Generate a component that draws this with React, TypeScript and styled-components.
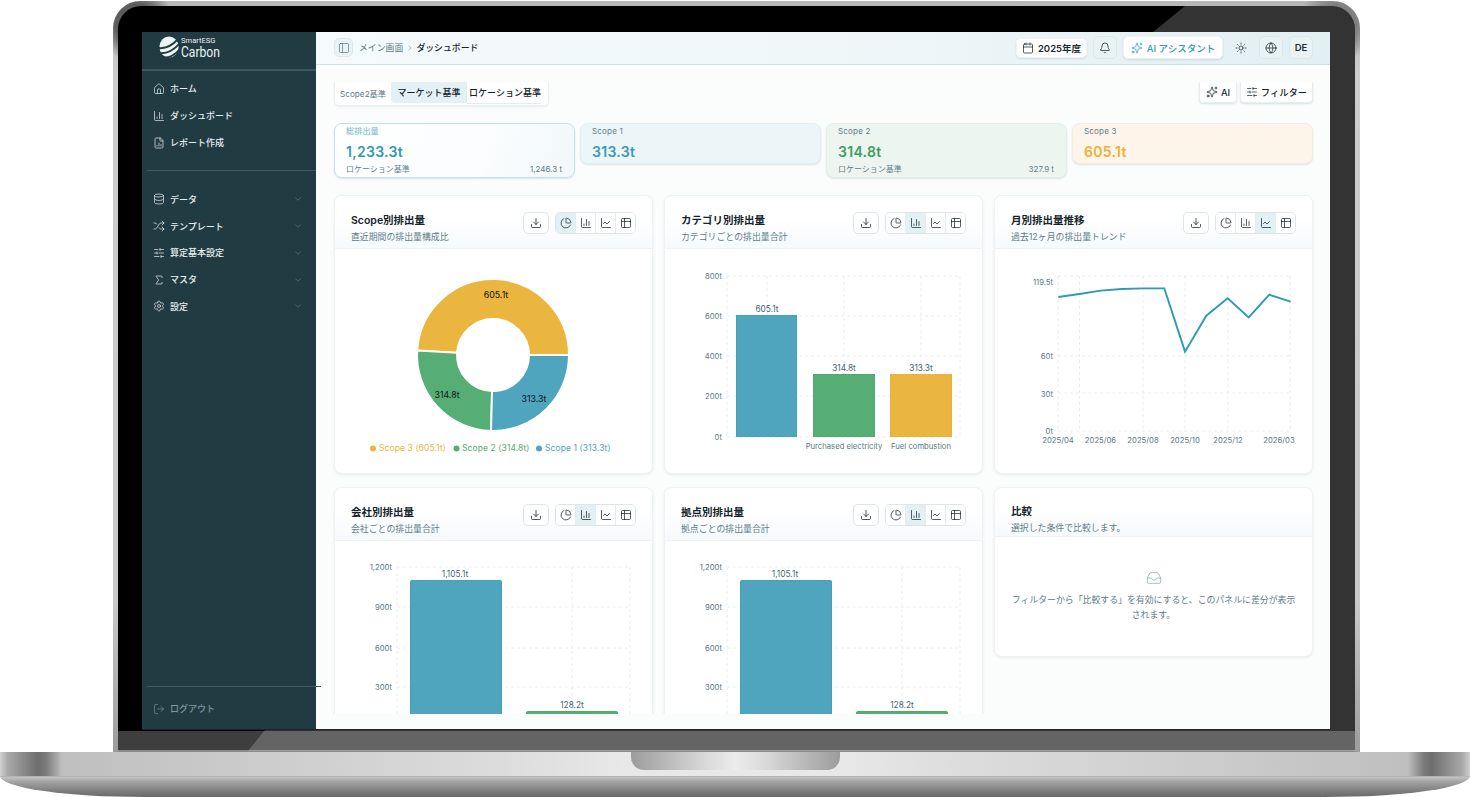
import React from "react";
import styled, { createGlobalStyle } from "styled-components";
import {
  House, ChartColumn, FileChartColumn, Database, Shuffle, SlidersHorizontal, Sigma, Settings,
  ChevronDown, ChevronRight, LogOut, PanelLeft, Calendar, Bell, Sparkles, Sun, Globe, Download,
  ChartPie, ChartLine, Table2, Inbox,
} from "lucide-react";

const Global = createGlobalStyle`
  html, body { margin: 0; padding: 0; background: #fff; overflow: hidden; }
  * { box-sizing: border-box; }
  body { font-family: Inter, "Noto Sans CJK JP", sans-serif; }
`;

const Page = styled.div`
  width: 1470px; height: 797px; display: flex; flex-direction: column; align-items: center; overflow: hidden; background: #fff;
`;
const Lid = styled.div`
  align-self: flex-start; flex: none; width: 1247px; height: 751px; margin: 1px 0 0 113px; padding: 5px 5px 0; border-radius: 27px 27px 0 0;
  background:
    radial-gradient(circle 38px at 24px 24px, #5c5c5c 55%, transparent 100%),
    radial-gradient(circle 38px at calc(100% - 24px) 24px, #808080 55%, transparent 100%),
    linear-gradient(180deg, #b6b6b6 0, #cdcdcd 10%, #c8c8c8 80%, #9c9c9c 100%);
`;
const Bezel = styled.div`
  position: relative; height: 746px; padding: 26px 25px 21px 24px; border-radius: 23px 23px 0 0; overflow: hidden;
  background: linear-gradient(180deg, #000 0, #000 calc(100% - 21px), #3e3e3e calc(100% - 21px), #3e3e3e calc(100% - 2px), #8a8a8a calc(100% - 2px));
  &::after {
    content: ""; position: absolute; inset: 0; background: rgba(255, 255, 255, 0.2);
    clip-path: polygon(1067px 0, 1237px 0, 1237px 745px, 130px 745px, 147px 724px, 1035px 26px);
  }
`;
const Screen = styled.div`
  position: relative; z-index: 1; display: flex; width: 1188px; height: 698px; background: #fbfdfd; border-bottom: 1px solid #222;
`;
const BaseTop = styled.div`
  width: 1470px; height: 24px; display: flex; justify-content: center; flex: none;
  background: linear-gradient(90deg, #d0d0d0 0, #a8a8a8 8px, #6e6e6e 38px, #7a7a7a 46px, #bfbfbf 62px, #c8c8c8 200px, #dcdcdc 500px, #e8e8e8 630px, #e8e8e8 840px, #dcdcdc 970px, #c8c8c8 1270px, #bfbfbf 1408px, #7a7a7a 1424px, #6e6e6e 1432px, #a8a8a8 1462px, #d0d0d0 1470px);
`;
const Notch = styled.div`
  width: 209px; height: 18px; border-radius: 0 0 13px 13px;
  background: linear-gradient(90deg, #9c9c9c 0, #d8d8d8 35%, #ececec 50%, #d8d8d8 65%, #9c9c9c 100%);
`;
const BaseBottom = styled.div`
  width: 1470px; height: 21px; flex: none; border-top: 1px solid #b5b5b5; border-radius: 0 0 145px 145px / 0 0 21px 21px;
  background: linear-gradient(180deg, #c4c4c4 0, #a2a2a2 25%, #858585 60%, #686868 100%);
`;

/* Sidebar */
const Sidebar = styled.aside`
  position: relative; z-index: 2; width: 174px; flex: none; display: flex; flex-direction: column; background: #213b43; color: #e6eef0;
`;
const Brand = styled.div`
  height: 39px; padding: 4px 0 0 17px; display: flex; align-items: flex-start; gap: 2px; border-bottom: 2px solid #3b575f; flex: none;
`;
const BrandText = styled.div`
  display: flex; flex-direction: column; color: #e9f0f2;
`;
const BrandSmall = styled.span`
  font: 400 7.6px/10px Roboto, sans-serif;
`;
const BrandBig = styled.span`
  font: 400 15.5px/13px Roboto, sans-serif; display: block; width: 39px; transform-origin: left; transform: scaleX(.78);
`;
const NavGroup = styled.nav`
  display: flex; flex-direction: column; padding-top: ${p => p.$top}px;
`;
const NavItem = styled.div`
  height: ${p => p.$h || 27}px; display: flex; align-items: center; padding: 0 13px 0 11px; gap: 5px;
  font-size: 9px; font-weight: 500; color: ${p => (p.$muted ? "#7f979e" : "#e6eef0")};
  svg { flex: none; }
`;
const NavLabel = styled.span`
  flex: 1; white-space: nowrap;
`;
const SideRule = styled.div`
  height: 1px; width: ${p => p.$w || 169}px; margin-left: 5px; margin-top: ${p => p.$top || 0}px; background: #3f5a62; flex: none;
`;
const Foot = styled.div`
  margin-top: auto; padding-bottom: 7px;
`;
const FootRule = styled(SideRule)`
  margin-bottom: 8px;
`;

/* Main */
const Main = styled.main`
  flex: 1; min-width: 0; display: flex; flex-direction: column;
`;
const TopBar = styled.header`
  height: 33px; flex: none; display: flex; align-items: center; padding: 0 17px 1px 18px; gap: 6px;
  background: linear-gradient(90deg, #f5fafb 0, #eff7f9 50%, #e2eff3 100%); border-bottom: 1px solid #cfdfe4;
`;
const IconBtn = styled.div`
  width: ${p => p.$w || 24}px; height: ${p => p.$h || 23}px; flex: none; display: flex; align-items: center; justify-content: center; gap: 4px;
  border-radius: 5px; color: ${p => p.$color || "#1c2b30"}; font-size: 9.5px; font-weight: ${p => p.$weight || 600}; white-space: nowrap;
  background: ${p => (p.$white ? "#fff" : p.$flat ? "transparent" : "#e9f3f6")};
  border: 1px solid ${p => (p.$flat ? "transparent" : p.$white ? "#eef4f6" : "#dbe8ec")};
  ${p => (p.$white ? "box-shadow: 0 1px 2px rgba(20,70,90,.14);" : "")}
`;
const Crumbs = styled.div`
  flex: 1; display: flex; align-items: center; gap: 2.5px; font-size: 8.9px; color: #5d7b86; white-space: nowrap;
`;
const CrumbNow = styled.span`
  color: #15242a; font-weight: 500;
`;
const Content = styled.div`
  flex: 1; min-height: 0; padding: 16px 17px 0 18px; margin-bottom: 15px; overflow: hidden; display: flex; flex-direction: column;
`;
const ToolRow = styled.div`
  display: flex; justify-content: space-between; align-items: flex-start; height: 25px; flex: none; margin-top: 1px;
`;
const ScopeBox = styled.div`
  width: 215px; height: 24px; display: flex; align-items: flex-start; padding-left: 5px; background: #fff; border-radius: 0 0 5px 5px;
  border: 1px solid #e8f0f2; border-top: none; box-shadow: 0 1px 2px rgba(20,70,90,.08);
`;
const ScopeLabel = styled.span`
  width: 51px; height: 21px; display: flex; align-items: center; font-size: 8.2px; color: #5d7b86; white-space: nowrap;
`;
const Seg = styled.div`
  width: 76px; height: 21px; display: flex; align-items: center; justify-content: center; font-size: 9px; font-weight: 500; color: #15242a; white-space: nowrap;
  background: ${p => (p.$on ? "#e3f1f5" : "#fff")};
  border-radius: ${p => (p.$on ? "0 0 0 4px" : "0 0 4px 0")};
  box-shadow: ${p => (p.$on ? "none" : "0 1px 1px rgba(20,70,90,.12)")};
`;
const RightTools = styled.div`
  display: flex; gap: 3px;
`;
const ToolBtn = styled.div`
  width: ${p => p.$w}px; height: 21px; display: flex; align-items: center; justify-content: center; gap: 3px; font-size: 9.3px; font-weight: 500; color: #15242a;
  background: #fff; border: 1px solid #e6eef1; border-top: none; border-radius: 0 0 4px 4px; box-shadow: 0 1px 2px rgba(20,70,90,.15); white-space: nowrap;
`;
const KpiRow = styled.div`
  display: grid; grid-template-columns: repeat(4, 241px); gap: 5px; margin-top: 16px; align-items: start; flex: none;
`;
const Kpi = styled.div`
  padding: 2px 12px 0 11px; height: ${p => (p.$tall ? 55 : 41)}px; border-radius: 8px;
  background: ${p => p.$bg}; border: 1px solid ${p => p.$border};
  box-shadow: 0 1px 2px rgba(30,70,90,.14);
`;
const KpiLabel = styled.div`
  font-size: 8px; line-height: 10px; color: ${p => p.$color || "#5f7f8a"}; letter-spacing: .2px;
`;
const KpiValue = styled.div`
  margin-top: 8px; font-size: 14px; line-height: 16px; font-weight: 600; color: ${p => p.$color}; letter-spacing: .3px;
`;
const KpiFoot = styled.div`
  margin-top: 4px; display: flex; justify-content: space-between; font-size: 8px; line-height: 11px; color: #5f7f8a;
`;
const Charts = styled.div`
  display: grid; grid-template-columns: repeat(3, 319px); column-gap: 11px; row-gap: 13px; margin-top: 17px; align-items: start; flex: none;
`;
const Card = styled.section`
  background: #fff; border: 1px solid #edf2f3; border-radius: 8px; box-shadow: 0 1px 3px rgba(30,60,70,.09); overflow: hidden;
`;
const CardHead = styled.div`
  height: ${p => p.$h || 53}px; padding: ${p => (p.$h ? 15 : 16)}px 16px 0; display: flex; justify-content: space-between; align-items: flex-start;
  background: linear-gradient(180deg, #fff 40%, #f6fafc 100%); border-bottom: 1px solid #edf2f4;
`;
const HeadText = styled.div`
  display: flex; flex-direction: column; gap: 1px; padding-top: 1px;
`;
const Title = styled.h3`
  margin: 0; font-size: 10.5px; line-height: 16px; font-weight: 600; color: #15242a;
`;
const Sub = styled.p`
  margin: 0; font-size: 8.9px; line-height: 14px; color: #5d7d88; white-space: nowrap;
`;
const Actions = styled.div`
  display: flex; gap: 6px;
`;
const DownloadBtn = styled.div`
  width: 26px; height: 22px; display: flex; align-items: center; justify-content: center; border: 1px solid #dbe6ea; border-radius: 5px; background: #fff; color: #1c2b30;
`;
const Toggle = styled.div`
  width: 81px; height: 22px; display: flex; border: 1px solid #dbe6ea; border-radius: 5px; overflow: hidden; background: #fff;
`;
const ToggleCell = styled.div`
  flex: 1; display: flex; align-items: center; justify-content: center; color: #1c2b30;
  background: ${p => (p.$on ? "#e3f1f5" : "#fff")};
  & + & { border-left: 1px solid #e3ecef; }
`;
const Plot = styled.svg`
  display: block; width: 317px; height: ${p => p.$h}px;
`;
const Axis = styled.text`
  font-family: Inter, sans-serif; font-size: 7.7px; fill: #5b7a85;
`;
const DataLabel = styled.text`
  font-family: Inter, sans-serif; font-size: 8.3px; fill: #4a6570; text-anchor: middle;
`;
const SliceLabel = styled.text`
  font-family: Inter, sans-serif; font-size: 8.8px; fill: #0d1518; text-anchor: middle;
`;
const Legend = styled.text`
  font-family: Inter, sans-serif; font-size: 8.5px; letter-spacing: .1px;
`;
const GridLine = styled.line`
  stroke: #e7eef0; stroke-width: 1; stroke-dasharray: 3 3;
`;
const Empty = styled.div`
  height: 119px; padding: 33px 16px 0; display: flex; flex-direction: column; align-items: center; color: #9db4bd;
`;
const EmptyText = styled.p`
  margin: 6px 0 0; text-align: center; font-size: 8.9px; line-height: 15px; color: #5d7d88;
`;

const BLUE = "#4fa5bd", GREEN = "#57ae75", YELLOW = "#ebb63f";
const BLUE_EDGE = "#47a0b9", GREEN_EDGE = "#50a96f", YELLOW_EDGE = "#eab239";

const Logo = () => (
  <svg width="20" height="22" viewBox="0 0 20 22">
    <ellipse cx="10" cy="11" rx="9.6" ry="10.6" fill="#eef3f4" />
    <path d="M-1 12C6 13 14 9 20 2M0 17C7 18 15 14 21 7M4 21.5C10 22 16 19 21 13" fill="none" stroke="#213b43" strokeWidth="2" />
  </svg>
);

const Head = ({ title, sub, active }: { title: string; sub: string; active: number }) => (
  <CardHead>
    <HeadText>
      <Title>{title}</Title>
      <Sub>{sub}</Sub>
    </HeadText>
    <Actions>
      <DownloadBtn><Download size={12} strokeWidth={1.6} /></DownloadBtn>
      <Toggle>
        {[ChartPie, ChartColumn, ChartLine, Table2].map((I, i) => (
          <ToggleCell key={i} $on={i === active}><I size={12} strokeWidth={1.5} /></ToggleCell>
        ))}
      </Toggle>
    </Actions>
  </CardHead>
);

const arc = (cx: number, cy: number, r0: number, r1: number, a0: number, a1: number) => {
  const p = (r: number, a: number) => `${cx + r * Math.cos((a * Math.PI) / 180)} ${cy - r * Math.sin((a * Math.PI) / 180)}`;
  const large = a1 - a0 > 180 ? 1 : 0;
  return `M${p(r1, a0)}A${r1} ${r1} 0 ${large} 0 ${p(r1, a1)}L${p(r0, a1)}A${r0} ${r0} 0 ${large} 1 ${p(r0, a0)}Z`;
};

const Donut = () => (
  <Plot $h={224} viewBox="335 249 317 224">
    <path d={arc(493, 355, 36, 76, 0, 176.6)} fill={YELLOW} stroke="#fff" strokeWidth="2" />
    <path d={arc(493, 355, 36, 76, 176.6, 268.5)} fill={GREEN} stroke="#fff" strokeWidth="2" />
    <path d={arc(493, 355, 36, 76, 268.5, 360)} fill={BLUE} stroke="#fff" strokeWidth="2" />
    <SliceLabel x="496" y="298">605.1t</SliceLabel>
    <SliceLabel x="447" y="398">314.8t</SliceLabel>
    <SliceLabel x="534" y="402">313.3t</SliceLabel>
    <circle cx="373" cy="448.5" r="3" fill={YELLOW} />
    <Legend x="379" y="451" fill={YELLOW}>Scope 3 (605.1t)</Legend>
    <circle cx="456.5" cy="448.5" r="3" fill={GREEN} />
    <Legend x="462" y="451" fill={GREEN}>Scope 2 (314.8t)</Legend>
    <circle cx="539" cy="448.5" r="3" fill={BLUE} />
    <Legend x="545" y="451" fill={BLUE}>Scope 1 (313.3t)</Legend>
  </Plot>
);

const CategoryChart = () => (
  <Plot $h={224} viewBox="665 249 317 224">
    {[276, 316, 356, 396, 437].map(y => <GridLine key={y} x1="727" x2="960" y1={y} y2={y} />)}
    {[727, 767, 844, 921, 960].map(x => <GridLine key={x} x1={x} x2={x} y1="276" y2="437" />)}
    {[["800t", 276], ["600t", 316], ["400t", 356], ["200t", 396], ["0t", 437]].map(([t, y]) => (
      <Axis key={t} x="722" y={Number(y) + 3} textAnchor="end">{t}</Axis>
    ))}
    <rect x="736.5" y="315.5" width="60" height="121" fill={BLUE} stroke={BLUE_EDGE} />
    <rect x="813.5" y="374.5" width="61" height="62" fill={GREEN} stroke={GREEN_EDGE} />
    <rect x="890.5" y="374.5" width="61" height="62" fill={YELLOW} stroke={YELLOW_EDGE} />
    <DataLabel x="767" y="312">605.1t</DataLabel>
    <DataLabel x="844" y="371">314.8t</DataLabel>
    <DataLabel x="921" y="371">313.3t</DataLabel>
    <Axis x="844" y="449" textAnchor="middle">Purchased electricity</Axis>
    <Axis x="921" y="449" textAnchor="middle">Fuel combustion</Axis>
  </Plot>
);

const linePts = [[175, 291], [238, 282], [302, 272], [365, 267], [430, 265], [493, 265], [555, 455], [619, 347], [683, 295], [746, 352], [808, 284], [872, 305]];

const TrendChart = () => (
  <Plot $h={224} viewBox="995 249 317 224">
    {[276, 356, 393, 431].map(y => <GridLine key={y} x1="1058" x2="1290" y1={y} y2={y} />)}
    {[1058, 1079.5, 1143, 1185, 1228, 1290].map(x => <GridLine key={x} x1={x} x2={x} y1="276" y2="431" />)}
    {[["119.5t", 285], ["60t", 359], ["30t", 397], ["0t", 434]].map(([t, y]) => (
      <Axis key={t} x="1053" y={y} textAnchor="end">{t}</Axis>
    ))}
    <polyline fill="none" stroke="#2f9ab6" strokeWidth="1.9" points={linePts.map(([x, y]) => `${1000 + x / 3},${200 + y / 3}`).join(" ")} />
    {[["2025/04", 1058], ["2025/06", 1100.5], ["2025/08", 1143], ["2025/10", 1185], ["2025/12", 1228], ["2026/03", 1279]].map(([t, x]) => (
      <Axis key={t} x={x} y="443" textAnchor="middle">{t}</Axis>
    ))}
  </Plot>
);

const SiteChart = () => (
  <Plot $h={240} viewBox="335 541 317 240">
    {[567, 607, 648, 687, 728].map(y => <GridLine key={y} x1="397" x2="630" y1={y} y2={y} />)}
    {[397, 572, 630].map(x => <GridLine key={x} x1={x} x2={x} y1="567" y2="728" />)}
    {[["1,200t", 567], ["900t", 607], ["600t", 648], ["300t", 687]].map(([t, y]) => (
      <Axis key={t} x="392" y={Number(y) + 3} textAnchor="end">{t}</Axis>
    ))}
    <rect x="410.5" y="580.5" width="91" height="150" rx="1" fill={BLUE} stroke={BLUE_EDGE} />
    <rect x="526.5" y="711.5" width="91" height="20" rx="1" fill={GREEN} stroke={GREEN_EDGE} />
    <DataLabel x="455" y="577">1,105.1t</DataLabel>
    <DataLabel x="572" y="708">128.2t</DataLabel>
  </Plot>
);

const mainNav = [
  { I: House, t: "ホーム" },
  { I: ChartColumn, t: "ダッシュボード" },
  { I: FileChartColumn, t: "レポート作成" },
];
const subNav = [
  { I: Database, t: "データ" },
  { I: Shuffle, t: "テンプレート" },
  { I: SlidersHorizontal, t: "算定基本設定" },
  { I: Sigma, t: "マスタ" },
  { I: Settings, t: "設定" },
];

export default function App() {
  return (
    <Page>
      <Global />
      <Lid>
        <Bezel>
          <Screen>
            <Sidebar>
              <Brand>
                <Logo />
                <BrandText>
                  <BrandSmall>SmartESG</BrandSmall>
                  <BrandBig>Carbon</BrandBig>
                </BrandText>
              </Brand>
              <NavGroup $top={4}>
                {mainNav.map(({ I, t }) => (
                  <NavItem key={t}><I size={12} strokeWidth={1.4} /><NavLabel>{t}</NavLabel></NavItem>
                ))}
              </NavGroup>
              <SideRule $top={14} />
              <NavGroup $top={15}>
                {subNav.map(({ I, t }) => (
                  <NavItem key={t} $h={26.75}>
                    <I size={12} strokeWidth={1.4} />
                    <NavLabel>{t}</NavLabel>
                    <ChevronDown size={10} strokeWidth={1.2} color="#7f979e" />
                  </NavItem>
                ))}
              </NavGroup>
              <Foot>
                <FootRule $w={174} />
                <NavItem $muted><LogOut size={12} strokeWidth={1.3} /><NavLabel>ログアウト</NavLabel></NavItem>
              </Foot>
            </Sidebar>
            <Main>
              <TopBar>
                <IconBtn $w={19} $h={19}><PanelLeft size={12} strokeWidth={1.3} color="#4d6a75" /></IconBtn>
                <Crumbs>
                  メイン画面
                  <ChevronRight size={8} strokeWidth={1.4} />
                  <CrumbNow>ダッシュボード</CrumbNow>
                </Crumbs>
                <IconBtn $w={71} $h={20} $white><Calendar size={12} strokeWidth={1.5} />2025年度</IconBtn>
                <IconBtn><Bell size={12} strokeWidth={1.5} /></IconBtn>
                <IconBtn $w={100} $white $color="#3199b5" $weight={500}><Sparkles size={12} strokeWidth={1.5} />AI アシスタント</IconBtn>
                <IconBtn $flat><Sun size={12} strokeWidth={1.5} /></IconBtn>
                <IconBtn><Globe size={12} strokeWidth={1.5} /></IconBtn>
                <IconBtn>DE</IconBtn>
              </TopBar>
              <Content>
                <ToolRow>
                  <ScopeBox>
                    <ScopeLabel>Scope2基準</ScopeLabel>
                    <Seg $on>マーケット基準</Seg>
                    <Seg>ロケーション基準</Seg>
                  </ScopeBox>
                  <RightTools>
                    <ToolBtn $w={38}><Sparkles size={12} strokeWidth={1.5} />AI</ToolBtn>
                    <ToolBtn $w={73}><SlidersHorizontal size={12} strokeWidth={1.4} />フィルター</ToolBtn>
                  </RightTools>
                </ToolRow>
                <KpiRow>
                  <Kpi $tall $bg="linear-gradient(110deg,#fff 0,#fbfdfe 60%,#f1f8fa 100%)" $border="#c6e0e8">
                    <KpiLabel $color="#6fb4c8">総排出量</KpiLabel>
                    <KpiValue $color="#3199b5">1,233.3t</KpiValue>
                    <KpiFoot><span>ロケーション基準</span><span>1,246.3 t</span></KpiFoot>
                  </Kpi>
                  <Kpi $bg="#ecf5f8" $border="#e3eef1">
                    <KpiLabel>Scope 1</KpiLabel>
                    <KpiValue $color="#3b9ab5">313.3t</KpiValue>
                  </Kpi>
                  <Kpi $tall $bg="#edf5f0" $border="#e3eee7">
                    <KpiLabel>Scope 2</KpiLabel>
                    <KpiValue $color="#3f9d62">314.8t</KpiValue>
                    <KpiFoot><span>ロケーション基準</span><span>327.9 t</span></KpiFoot>
                  </Kpi>
                  <Kpi $bg="#fdf5ea" $border="#f5ecdf">
                    <KpiLabel>Scope 3</KpiLabel>
                    <KpiValue $color="#eeb032">605.1t</KpiValue>
                  </Kpi>
                </KpiRow>
                <Charts>
                  <Card>
                    <Head title="Scope別排出量" sub="直近期間の排出量構成比" active={0} />
                    <Donut />
                  </Card>
                  <Card>
                    <Head title="カテゴリ別排出量" sub="カテゴリごとの排出量合計" active={1} />
                    <CategoryChart />
                  </Card>
                  <Card>
                    <Head title="月別排出量推移" sub="過去12ヶ月の排出量トレンド" active={2} />
                    <TrendChart />
                  </Card>
                  <Card>
                    <Head title="会社別排出量" sub="会社ごとの排出量合計" active={1} />
                    <SiteChart />
                  </Card>
                  <Card>
                    <Head title="拠点別排出量" sub="拠点ごとの排出量合計" active={1} />
                    <SiteChart />
                  </Card>
                  <Card>
                    <CardHead $h={49}>
                      <HeadText>
                        <Title>比較</Title>
                        <Sub>選択した条件で比較します。</Sub>
                      </HeadText>
                    </CardHead>
                    <Empty>
                      <Inbox size={16} strokeWidth={1.3} />
                      <EmptyText>フィルターから「比較する」を有効にすると、このパネルに差分が表示されます。</EmptyText>
                    </Empty>
                  </Card>
                </Charts>
              </Content>
            </Main>
          </Screen>
        </Bezel>
      </Lid>
      <BaseTop><Notch /></BaseTop>
      <BaseBottom />
    </Page>
  );
}
